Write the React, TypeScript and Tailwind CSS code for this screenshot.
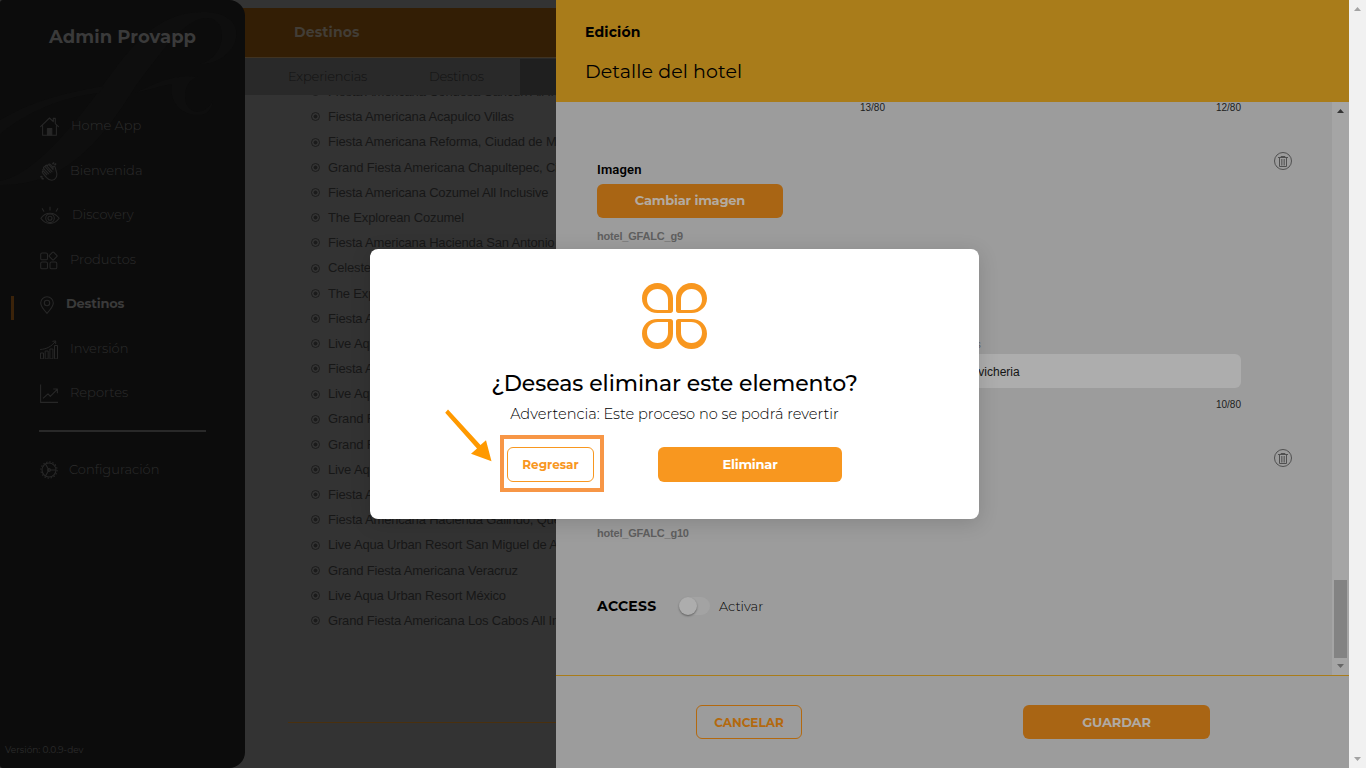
import * as React from "react";
import { clsx } from "clsx";

type IconProps = { className?: string };

const stroke = {
    fill: "none",
    stroke: "currentColor",
    strokeWidth: 1.1,
    strokeLinecap: "round" as const,
    strokeLinejoin: "round" as const,
};

const HomeIcon = ({ className }: IconProps) => (
    <svg className={className} width="19" height="19" viewBox="0 0 19 19" {...stroke}>
        <path d="M.6 9.6 9.5 1l3.8 3.7V1.4h2v5.2l3.1 3M2.6 8.4v9.8h13.8V8.4" />
        <path d="M7.4 18v-6.5h4.4V18z" fill="currentColor" />
    </svg>
);

const ClapIcon = ({ className }: IconProps) => (
    <svg className={className} width="18" height="19" viewBox="0 0 18 19" {...stroke}>
        <path d="M6.200 3.400 12 9.600M8.600 2.400l4.400 5V5.400c0-1.300 1.700-1.500 2.100-.2l1.400 5c1.200 4-1 8-4.800 8-2.500 0-4-1.200-5.400-2.800l-3.700-4.600c-.8-1 .3-2 1.200-1.300l3 3.200M3.800 9.500 3 8.400c-.7-1.100.5-2 1.400-1.100l4 4.400M4.400 7.300l-.6-.9C3 5.200 4.400 3.900 5.500 5.100l4.800 5.300M5.500 5.100c-.8-1.300.7-2.700 1.900-1.500l1.200-1.200c.6-.7 1.400-.4 2 .2l2.400 2.700" />
        <path d="M13 1.600 13.600 1M15 2.600l.6-.6M1 14.600l.8.300M2.200 16.600l.8.200" strokeWidth="1.700" />
    </svg>
);

const EyeIcon = ({ className }: IconProps) => (
    <svg className={className} width="20" height="19" viewBox="0 0 20 19" {...stroke}>
        <path d="M.9 12.200c4.700-6.700 13.500-6.700 18.200 0-4.700 6.900-13.500 6.900-18.200 0z" />
        <circle cx="10" cy="12.300" r="4.300" />
        <circle cx="10" cy="12.300" r="2" />
        <path d="M10 1v3M2.300 2.700l1.500 2.500M17.700 2.700l-1.500 2.500" />
    </svg>
);

const GridIcon = ({ className }: IconProps) => (
    <svg className={className} width="18" height="19" viewBox="0 0 18 19" {...stroke}>
        <rect x=".7" y="2" width="6.800" height="6.800" rx="1.400" />
        <rect x=".7" y="11" width="6.800" height="6.800" rx="1.400" />
        <rect x="10" y="11" width="6.800" height="6.800" rx="1.400" />
        <rect x="10" y="1.900" width="6.200" height="6.200" rx="1" transform="rotate(45 13.100 5)" />
    </svg>
);

const PinIcon = ({ className }: IconProps) => (
    <svg className={className} width="14" height="18" viewBox="0 0 14 18" {...stroke}>
        <path d="M7 17.300C3.200 13.200.7 10.200.7 7a6.300 6.300 0 0 1 12.600 0c0 3.200-2.500 6.200-6.300 10.300z" />
        <circle cx="7" cy="7" r="2.700" />
    </svg>
);

const BarsIcon = ({ className }: IconProps) => (
    <svg className={className} width="18" height="19" viewBox="0 0 18 19" {...stroke} strokeWidth={1}>
        <path d="M.5 18.500v-5.500h3v5.500zM5.200 18.500v-7.500h3v7.500zM9.900 18.500V9h3v9.500zM14.500 18.500V5.500h3v13z" />
        <path d="M.5 9.500C7 9 11.500 6.500 15.300 1.500M12.800 1.300l2.900-.4v2.800" />
    </svg>
);

const ChartIcon = ({ className }: IconProps) => (
    <svg className={className} width="18" height="19" viewBox="0 0 18 19" {...stroke} strokeLinecap="butt">
        <path d="M.6.500v17.900H18M3 14.400l5-4.600 2.300 2.500 6.900-7M13.200 5h4.200v4.200" />
    </svg>
);

const GearIcon = ({ className }: IconProps) => (
    <svg className={className} width="18" height="18" viewBox="0 0 18 18" {...stroke}>
        <circle cx="9" cy="9" r="7" />
        <circle cx="9" cy="9" r="8.100" strokeDasharray="1.500 1.680" strokeLinecap="butt" />
        <path d="M9.700 9h6M8.600 9.600l-3 5.200M8.600 8.400l-3-5.200" />
        <circle cx="9" cy="9" r="1.400" />
    </svg>
);

const TrashIcon = () => (
    <svg width="18" height="18" viewBox="0 0 18 18" fill="none" stroke="#505050">
        <circle cx="9" cy="9" r="8.500" />
        <path d="M4 5.500h10M7 5V4.500h4V5M5.500 6v8.500h7V6" />
        <path d="M7.500 7v6.500M9 7v6.500M10.500 7v6.500" strokeWidth=".7" />
    </svg>
);

// One petal, mirrored into the four quadrants
const PETAL =
    "M0 15.300C0 6.600 6.800 0 15.500 0S31 6.600 31 15.300V27.500c0 1.600-1 2.500-2.500 2.500H15.500C6.800 30 0 24 0 15.300zM5 16.500C5 22.500 9.500 27 16 27h10V16.500C26 10.500 21.500 6 15.500 6S5 10.500 5 16.500z";

const CloverLogo = () => (
    <svg width="66" height="66" viewBox="0 0 66 66" fill="#f8971f" fillRule="evenodd">
        <path d={PETAL} />
        <path d={PETAL} transform="matrix(-1 0 0 1 65 0)" />
        <path d={PETAL} transform="matrix(1 0 0 -1 0 66)" />
        <path d={PETAL} transform="matrix(-1 0 0 -1 65 66)" />
    </svg>
);

const NAV = [
    { label: "Home App", icon: HomeIcon },
    { label: "Bienvenida", icon: ClapIcon },
    { label: "Discovery", icon: EyeIcon },
    { label: "Productos", icon: GridIcon },
    { label: "Destinos", icon: PinIcon, active: true },
    { label: "Inversión", icon: BarsIcon },
    { label: "Reportes", icon: ChartIcon },
];

const HOTELS = [
    "Fiesta Americana Condesa Cancún All Inclusive",
    "Fiesta Americana Acapulco Villas",
    "Fiesta Americana Reforma, Ciudad de México",
    "Grand Fiesta Americana Chapultepec, Ciudad de México",
    "Fiesta Americana Cozumel All Inclusive",
    "The Explorean Cozumel",
    "Fiesta Americana Hacienda San Antonio",
    "Celeste Beach",
    "The Explorean",
    "Fiesta Americana",
    "Live Aqua",
    "Fiesta Americana",
    "Live Aqua",
    "Grand Fiesta",
    "Grand Fiesta",
    "Live Aqua",
    "Fiesta Americana",
    "Fiesta Americana Hacienda Galindo, Querétaro",
    "Live Aqua Urban Resort San Miguel de Allende",
    "Grand Fiesta Americana Veracruz",
    "Live Aqua Urban Resort México",
    "Grand Fiesta Americana Los Cabos All Inclusive",
];

const Sidebar = () => (
    <aside className="relative z-10 flex h-full w-[245px] shrink-0 flex-col overflow-hidden rounded-l-[3px] rounded-r-2xl bg-[#0c0c0c] text-[#2d2d2d]">
        {/* Script initial behind the menu */}
        <svg className="absolute left-0 top-0" width="245" height="200" viewBox="0 0 245 200" fill="#0e0e0e">
            <path d="M0 181C28 176 62 141 98 92 126 54 152 12 202 12c24 0 37 10 34 26-3 15-18 26-36 26 14-4 22-16 22-29 0-12-8-18-17-17-22 2-44 35-68 66C104 137 68 186 0 185z" />
            <path d="M0 120c28-17 62-27 104-34l-5 7C60 97 26 113 0 134zM135 93c18-9 40-20 63-16-13 3-16 20-10 30 6 8 19 6 25-7-1 9-6 15-15 15-18 0-29-14-26-31-12 2-24 6-37 9z" />
        </svg>
        <h1 className="relative mt-[25px] pl-[49px] text-[18px] font-bold leading-6 tracking-[0.05px] text-[#3a3a3a]">
            Admin Provapp
        </h1>
        <nav className="relative mt-[54.5px] flex flex-col">
            {NAV.map(({ label, icon: Icon, active }) => (
                <div key={label} className="flex h-[44.5px] items-center">
                    <span className={clsx("mt-[8px] h-6 w-[3px] ml-[11px]", active && "bg-[#3b230a]")} />
                    <Icon className="ml-[26px] mt-[2px] shrink-0 text-[#272727]" />
                    <span
                        className={clsx(
                            "ml-3 text-[13px]",
                            active ? "font-bold tracking-[-0.2px] text-[#3a3a3a]" : "font-light"
                        )}
                    >
                        {label}
                    </span>
                </div>
            ))}
        </nav>
        <div className="relative ml-[39px] mt-[14.5px] h-[2px] w-[167px] bg-[#292929]" />
        <div className="relative mt-[28px] flex items-center pl-10">
            <GearIcon className="mt-[1px] text-[#272727]" />
            <span className="ml-[11px] text-[13px] font-light">Configuración</span>
        </div>
        <p className="mb-[10px] ml-[5px] mt-auto text-[9px] leading-4">Versión: 0.0.9-dev</p>
    </aside>
);

const Main = () => (
    <main className="-ml-5 flex w-[331px] shrink-0 flex-col overflow-hidden bg-[#333333] pt-2">
        <header className="flex h-[49px] items-center bg-[#331e05] pl-[69px] text-[14px] font-bold tracking-[0.15px] text-[#423d36]">
            Destinos
        </header>
        <div className="flex h-[38px] shrink-0 border-t border-[#403322] bg-[#292929] text-[13px] font-light text-[#121212]">
            <span className="flex w-[140px] items-center pl-[63px] tracking-[-0.15px]">Experiencias</span>
            <span className="flex w-[155px] items-center pl-[64px] tracking-[-0.2px]">Destinos</span>
            <span className="mt-px flex-1 bg-[#1f1f1f]" />
        </div>
        <ul className="h-[546px] overflow-hidden pl-[86px] font-['Liberation_Sans',Arial,sans-serif] text-[13px] text-[#171717]">
            {HOTELS.map((name, i) => (
                <li
                    key={i}
                    className={clsx("flex h-[25.2px] items-center whitespace-nowrap tracking-[-0.17px]", i === 0 && "-mt-[15.8px]")}
                >
                    <svg className="mr-2 shrink-0" width="9" height="9" viewBox="0 0 9 9" fill="none" stroke="#1b1b1b">
                        <circle cx="4.500" cy="4.500" r="4" />
                        <circle cx="4.500" cy="4.500" r="1.500" fill="#1b1b1b" />
                    </svg>
                    {name}
                </li>
            ))}
        </ul>
        <div className="ml-[63px] mt-[81px] h-px bg-[#4a300e]" />
    </main>
);

const Counter = ({ value }: { value: string }) => (
    <span className="w-[288px] text-right font-['Liberation_Sans',Arial,sans-serif] text-[10px] leading-3 text-[#1c1c1c]">
        {value}
    </span>
);

const ImageBlock = ({ counters, name }: { counters: string[]; name: string }) => (
    <section className="h-[297px] pl-[41px]">
        <div className="flex h-3 gap-[68px]">
            {counters.map((c) => (
                <Counter key={c} value={c} />
            ))}
        </div>
        <div className="flex pt-[38px]">
            <div className="w-[677px] pt-[9px]">
                <p className="font-[Roboto,sans-serif] text-[13px] font-semibold leading-[18px] tracking-[0.15px]">Imagen</p>
                <button className="mt-[5px] block h-[34px] w-[186px] rounded-md bg-[#a96514] text-[13px] font-bold tracking-[-0.2px] text-[#b3aaa0]">
                    Cambiar imagen
                </button>
                <p className="mt-[10px] font-['Liberation_Sans',Arial,sans-serif] text-[11px] font-bold leading-4 tracking-[-0.2px] text-[#5f5f5f]">
                    {name}
                </p>
            </div>
            <div className="flex h-[18px]">
                <TrashIcon />
            </div>
        </div>
    </section>
);

const ImageFields = () => (
    <div className="-mt-[60px] flex h-[60px] gap-[68px] pl-[41px] font-['Liberation_Sans',Arial,sans-serif]">
        {["Español", "Inglés"].map((lang) => (
            <div key={lang} className="w-[288px]">
                <p className="h-[15px] text-[10px] leading-3 tracking-[0.2px] text-[#5c6169]">{lang}</p>
                <div className="flex h-[34px] items-center rounded-md bg-[#adadad] pl-[10px] pt-px text-[12px] text-[#141414]">
                    Cevicheria
                </div>
            </div>
        ))}
    </div>
);

const EditPanel = () => (
    <section className="flex h-full w-[793px] shrink-0 flex-col bg-[#9c9c9c] text-black">
        <header className="h-[102px] shrink-0 bg-[#a97c1a] pl-[29px] pt-[22px]">
            <h2 className="text-[14px] font-bold leading-5 tracking-[0.15px]">Edición</h2>
            <p className="mt-[18px] text-[19px] leading-6 tracking-[0.1px]">Detalle del hotel</p>
        </header>
        <div className="flex h-[573px] shrink-0">
            <div className="w-[776px] overflow-hidden">
                <ImageBlock counters={["13/80", "12/80"]} name="hotel_GFALC_g9" />
                <ImageFields />
                <ImageBlock counters={["10/80 ", "10/80"]} name="hotel_GFALC_g10" />
                <div className="-mt-[102px] flex h-6 items-center pl-[41px]">
                    <span className="w-[82px] text-[14px] font-bold tracking-[0.3px]">ACCESS</span>
                    <span className="flex h-[18px] w-[31px] rounded-full bg-[#a3a3a3]">
                        <span className="size-[18px] rounded-full bg-[#adadad] shadow-[0_1px_2px_rgba(0,0,0,0.4)]" />
                    </span>
                    <span className="ml-[9px] pt-px text-[13px] font-light">Activar</span>
                </div>
            </div>
            <div className="flex w-[17px] flex-col items-center bg-[#a5a5a5]">
                <svg className="mt-[7px]" width="7" height="4" viewBox="0 0 7 4" fill="#343434">
                    <path d="M3.500 0 7 4H0z" />
                </svg>
                <span className="mt-auto h-[78px] w-[13px] bg-[#838383]" />
                <svg className="mb-[7px] mt-[6px]" width="7" height="4" viewBox="0 0 7 4" fill="#666">
                    <path d="M3.500 4 0 0h7z" />
                </svg>
            </div>
        </div>
        <footer className="flex flex-1 items-start border-t border-[#a97c1a] pl-[140px] pt-[29px] text-[13px]">
            <button className="h-[34px] w-[106px] rounded-md border border-[#b3690f] pt-px text-[12px] font-bold text-[#b3690f]">
                CANCELAR
            </button>
            <button className="ml-[221px] h-[34px] w-[187px] rounded-md bg-[#a96514] pt-px font-bold tracking-[-0.15px] text-[#b0aaa3]">
                GUARDAR
            </button>
        </footer>
    </section>
);

const ConfirmDialog = () => (
    <div className="absolute inset-0 z-20 pl-[370px] pt-[249px]">
        <div
            role="dialog"
            className="relative flex h-[270px] w-[609px] flex-col items-center rounded-lg bg-white pt-[34px] text-black shadow-[0_4px_20px_rgba(0,0,0,0.15)]"
        >
            <CloverLogo />
            <h3 className="mt-[21px] whitespace-nowrap text-[22px] font-medium leading-7 tracking-[-0.06px]">
                ¿Deseas eliminar este elemento?
            </h3>
            <p className="mt-[6px] whitespace-nowrap text-[14.6px] font-light leading-5">
                Advertencia: Este proceso no se podrá revertir
            </p>
            <div className="mt-[11px] flex w-full items-start pl-[130px]">
                <div className="border-4 border-[#f79646] pb-[6px] pl-[3px] pr-[6px] pt-2">
                    <button className="block h-[35px] w-[87px] rounded-md border border-[#f8971f] text-[12px] font-bold text-[#f8971f]">
                        Regresar
                    </button>
                </div>
                <button className="ml-[54px] mt-3 h-[35px] w-[184px] rounded-md bg-[#f8971f] text-[13px] font-bold tracking-[-0.2px] text-white">
                    Eliminar
                </button>
            </div>
            <svg className="absolute left-[75px] top-[160px]" width="47" height="53" viewBox="0 0 47 53" fill="#ff9900">
                <path d="M3 .5 35.500 36 41 31.300 46.500 52.300 26 44.800l6-5.400L.2 3.700z" />
            </svg>
        </div>
    </div>
);

export default function App() {
    return (
        <div className="relative flex h-[768px] w-[1366px] overflow-hidden bg-[#333333] font-[Montserrat,Inter,sans-serif]">
            <Sidebar />
            <Main />
            <EditPanel />
            <div className="flex w-[17px] flex-col items-center justify-between bg-[#f1f1f1] py-[7px]">
                <svg width="7" height="4" viewBox="0 0 7 4" fill="#a3a3a3">
                    <path d="M3.500 0 7 4H0z" />
                </svg>
                <svg width="7" height="4" viewBox="0 0 7 4" fill="#a3a3a3">
                    <path d="M3.500 4 0 0h7z" />
                </svg>
            </div>
            <ConfirmDialog />
        </div>
    );
}
